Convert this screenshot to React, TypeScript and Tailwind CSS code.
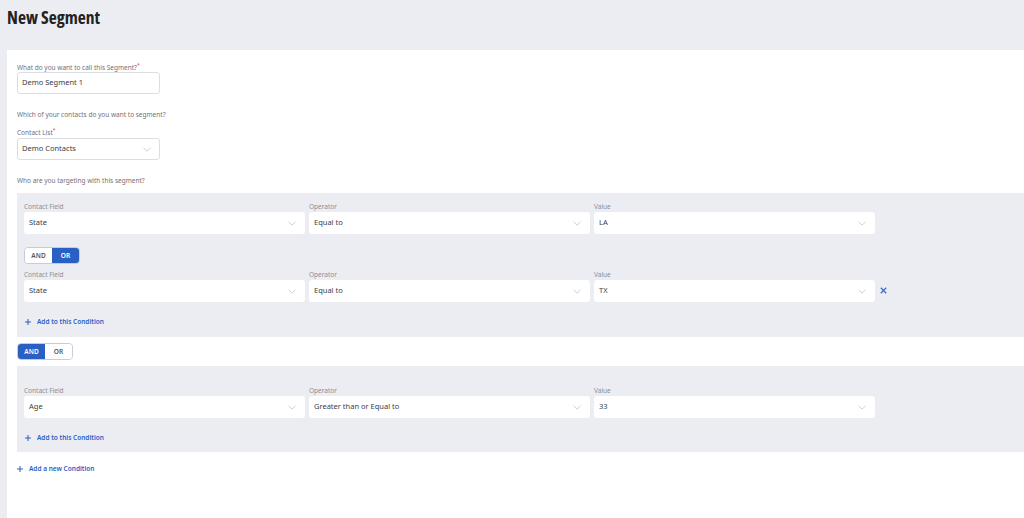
import React from "react";

const FONT = "font-['Noto_Sans','Open_Sans',sans-serif]";

const Chevron: React.FC = () => (
  <svg width="8" height="5" viewBox="0 0 8 5" className="shrink-0">
    <path d="M0.5 0.8 L4 4.2 L7.5 0.8" fill="none" stroke="#bfc2c9" strokeWidth="0.8" />
  </svg>
);

const Plus: React.FC = () => (
  <svg width="6" height="6" viewBox="0 0 6 6" className="shrink-0">
    <path d="M3 0 V6 M0 3 H6" stroke="#2a5fc4" strokeWidth="1" />
  </svg>
);

const Label: React.FC<{ children: React.ReactNode; className?: string }> = ({ children, className }) => (
  <div className={`text-[6.5px] text-[#6f727a] h-[9px] leading-[9px] ${className ?? ""}`}>{children}</div>
);

const Req: React.FC = () => <span className="text-[#e23b3b] align-top text-[5px] leading-[5px]">*</span>;

const Select: React.FC<{ value: string }> = ({ value }) => (
  <div className="h-[22px] bg-white rounded-[3px] flex items-center justify-between pl-[5px] pr-[9px] text-[7.5px] text-[#3a3d45]">
    <span>{value}</span>
    <Chevron />
  </div>
);

const Field: React.FC<{ label: string; value: string }> = ({ label, value }) => (
  <div className="w-[281px] flex flex-col">
    <div className="text-[6.5px] text-[#8a8d96] h-[9px] leading-[9px] mb-[1px]">{label}</div>
    <Select value={value} />
  </div>
);

const Row: React.FC<{ values: [string, string, string]; removable?: boolean }> = ({ values, removable }) => (
  <div className="flex items-end gap-[4px]">
    <Field label="Contact Field" value={values[0]} />
    <Field label="Operator" value={values[1]} />
    <Field label="Value" value={values[2]} />
    {removable && (
      <svg width="7" height="7" viewBox="0 0 7 7" className="ml-[1px] mb-[8px]">
        <path d="M0.8 0.8 L6.2 6.2 M6.2 0.8 L0.8 6.2" stroke="#3a6fd0" strokeWidth="1.3" />
      </svg>
    )}
  </div>
);

const Toggle: React.FC<{ active: "AND" | "OR" }> = ({ active }) => (
  <div className="flex w-[56px] h-[17px] rounded-[4px] border border-[#c9ccd3] overflow-hidden text-[6.5px] font-semibold">
    <div
      className={`flex-1 flex items-center justify-center ${
        active === "AND" ? "bg-[#2a5fc4] text-white" : "bg-white text-[#555]"
      }`}
    >
      AND
    </div>
    <div
      className={`flex-1 flex items-center justify-center ${
        active === "OR" ? "bg-[#2a5fc4] text-white" : "bg-white text-[#555]"
      }`}
    >
      OR
    </div>
  </div>
);

const AddLink: React.FC<{ text: string }> = ({ text }) => (
  <div className="flex items-center gap-[6px] h-[9px] text-[6.5px] font-semibold text-[#2a5fc4]">
    <Plus />
    <span>{text}</span>
  </div>
);

export default function App() {
  return (
    <div className={`w-[1024px] h-[518px] bg-[#ecedf2] overflow-hidden flex flex-col ${FONT}`}>
      <div className="h-[50px] pl-[7px] pt-[5px]">
        <h1 className="text-[17.5px] font-bold text-[#222] leading-[24px] font-['Open_Sans',sans-serif] font-stretch-[75%]">
          New Segment
        </h1>
      </div>
      <div className="flex-1 ml-[7px] bg-white pt-[13px] pl-[10px] flex flex-col">
        <Label>
          What do you want to call this Segment?
          <Req />
        </Label>
        <div className="w-[143px] h-[22px] border border-[#dcdee3] rounded-[3px] flex items-center pl-[4px] text-[7.5px] text-[#3a3d45]">
          Demo Segment 1
        </div>
        <Label className="mt-[16px]">Which of your contacts do you want to segment?</Label>
        <Label className="mt-[9px]">
          Contact List
          <Req />
        </Label>
        <div className="mt-[1px] w-[143px] h-[22px] border border-[#dcdee3] rounded-[3px] flex items-center justify-between pl-[4px] pr-[8px] text-[7.5px] text-[#3a3d45]">
          <span>Demo Contacts</span>
          <Chevron />
        </div>
        <Label className="mt-[16px]">Who are you targeting with this segment?</Label>

        <div className="mt-[8px] h-[144px] bg-[#ecedf3] pl-[7px] pt-[9px] flex flex-col">
          <Row values={["State", "Equal to", "LA"]} />
          <div className="mt-[13px]">
            <Toggle active="OR" />
          </div>
          <div className="mt-[6px]">
            <Row values={["State", "Equal to", "TX"]} removable />
          </div>
          <div className="mt-[15px] pl-[1px]">
            <AddLink text="Add to this Condition" />
          </div>
        </div>

        <div className="mt-[6px]">
          <Toggle active="AND" />
        </div>

        <div className="mt-[6px] h-[86px] bg-[#ecedf3] pl-[7px] pt-[20px] flex flex-col">
          <Row values={["Age", "Greater than or Equal to", "33"]} />
          <div className="mt-[15px] pl-[1px]">
            <AddLink text="Add to this Condition" />
          </div>
        </div>

        <div className="mt-[12px]">
          <AddLink text="Add a new Condition" />
        </div>
      </div>
    </div>
  );
}
